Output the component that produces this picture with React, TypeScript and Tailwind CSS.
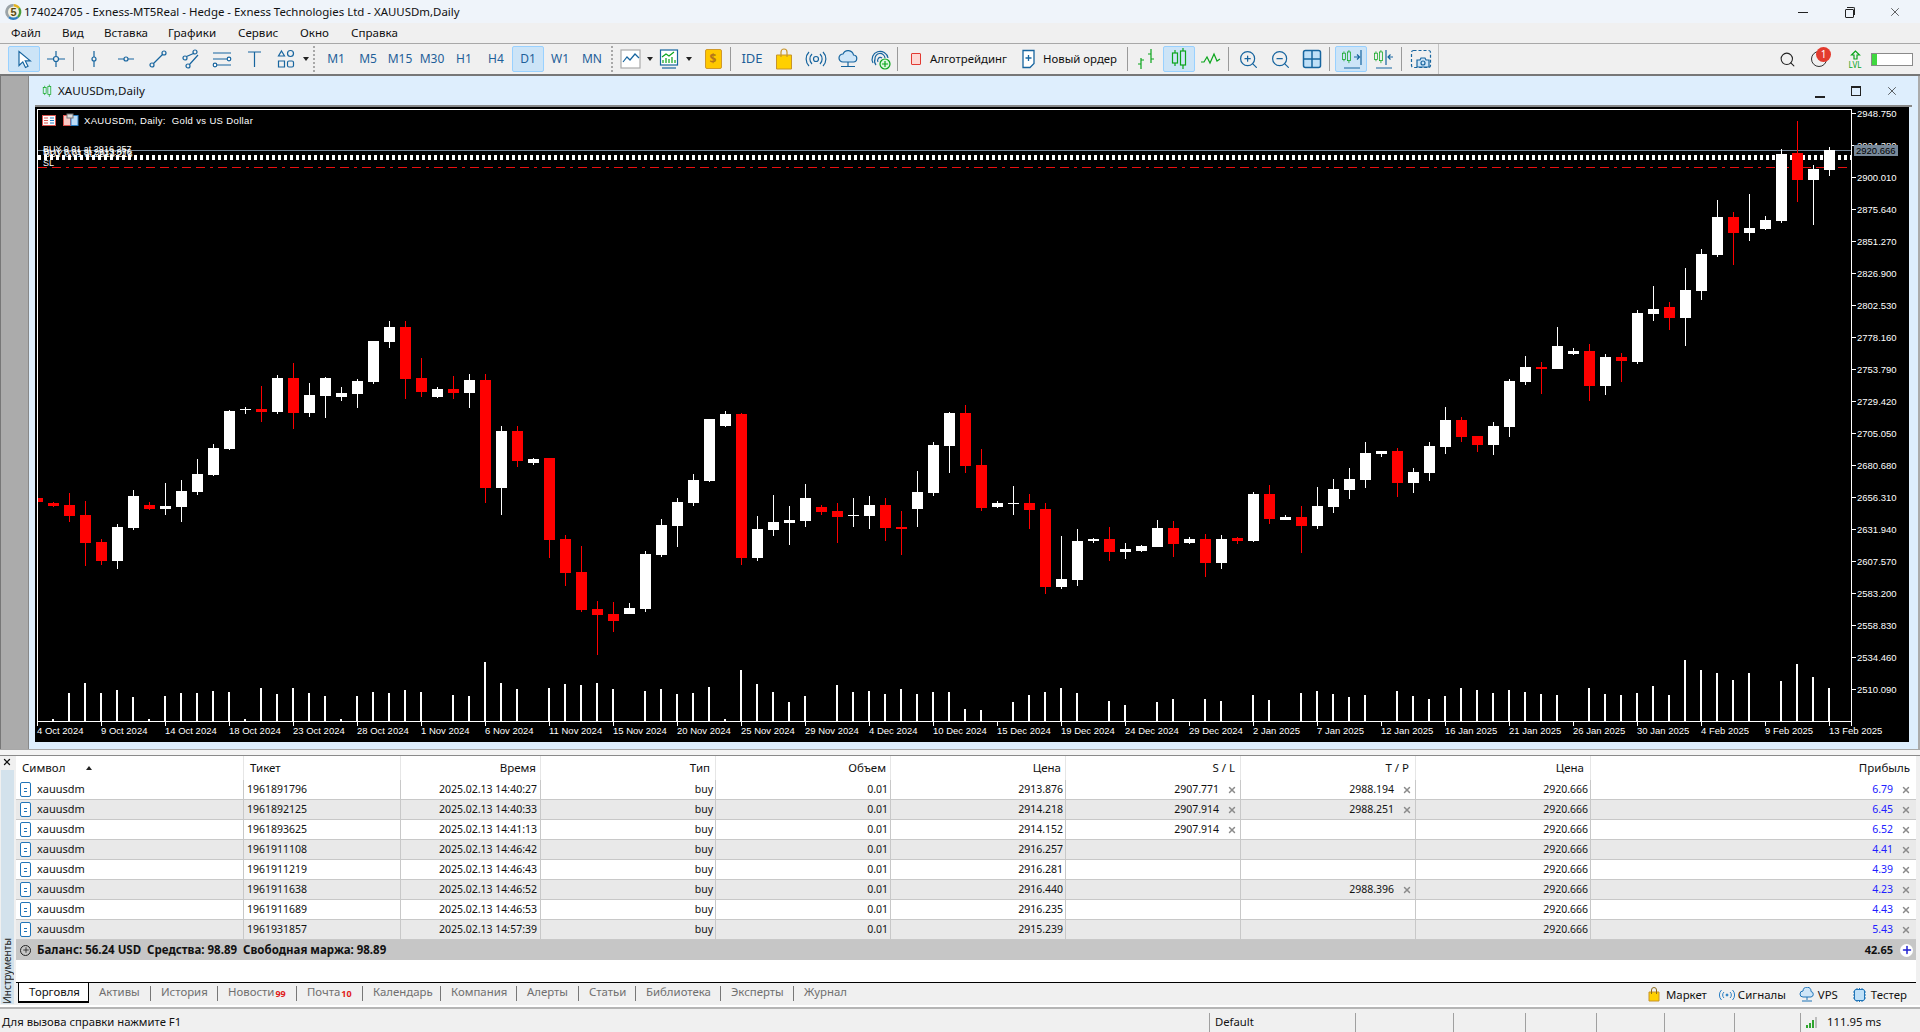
import { Plus, X, ZoomIn, ZoomOut, Search } from "lucide-react"
import type { ReactNode } from "react"

// high, body top, body bottom, low (page px), r = bearish
type Candle = [number, number, number, number, "r" | "w"]

const candles: Candle[] = [
  [498, 498, 502, 502, "r"], [502, 503, 506, 507, "r"], [493, 505, 516, 522, "r"], [501, 515, 543, 566, "r"],
  [539, 542, 561, 565, "r"], [524, 527, 561, 569, "w"], [490, 496, 528, 530, "w"], [502, 505, 509, 510, "r"],
  [483, 506, 509, 515, "w"], [480, 491, 507, 522, "w"], [459, 474, 492, 495, "w"], [444, 448, 475, 476, "w"],
  [410, 411, 449, 450, "w"], [407, 409, 410, 414, "w"], [386, 409, 412, 422, "r"], [375, 378, 412, 414, "w"],
  [363, 378, 413, 429, "r"], [383, 395, 413, 417, "w"], [377, 378, 396, 418, "w"], [387, 393, 397, 401, "w"],
  [379, 381, 394, 408, "w"], [341, 341, 382, 384, "w"], [321, 327, 342, 348, "w"], [321, 327, 379, 399, "r"],
  [358, 378, 392, 397, "r"], [387, 389, 397, 398, "w"], [376, 389, 393, 399, "r"], [374, 380, 393, 408, "w"],
  [374, 380, 488, 503, "r"], [426, 431, 488, 515, "w"], [426, 431, 461, 467, "r"], [458, 459, 463, 465, "w"],
  [458, 458, 540, 558, "r"], [535, 539, 573, 586, "r"], [546, 572, 610, 612, "r"], [601, 609, 615, 655, "r"],
  [602, 614, 621, 632, "r"], [603, 608, 614, 614, "w"], [551, 554, 609, 612, "w"], [519, 525, 555, 557, "w"],
  [498, 502, 526, 547, "w"], [474, 480, 503, 506, "w"], [419, 419, 481, 482, "w"], [411, 414, 426, 427, "w"],
  [413, 414, 558, 565, "r"], [516, 529, 558, 561, "w"], [495, 522, 530, 536, "w"], [506, 520, 523, 545, "w"],
  [484, 498, 521, 527, "w"], [505, 507, 512, 515, "r"], [503, 511, 517, 543, "r"], [498, 515, 516, 527, "w"],
  [496, 505, 516, 529, "w"], [498, 505, 528, 541, "r"], [511, 527, 529, 555, "r"], [471, 492, 509, 527, "w"],
  [442, 445, 493, 496, "w"], [412, 413, 446, 473, "w"], [405, 413, 466, 473, "r"], [449, 465, 508, 511, "r"],
  [501, 503, 507, 508, "w"], [486, 503, 504, 515, "w"], [494, 503, 510, 529, "r"], [503, 509, 587, 594, "r"],
  [536, 579, 587, 589, "w"], [529, 541, 580, 586, "w"], [538, 539, 541, 543, "w"], [527, 539, 552, 561, "r"],
  [543, 549, 552, 559, "w"], [545, 546, 551, 552, "w"], [520, 528, 547, 547, "w"], [521, 528, 544, 557, "r"],
  [537, 539, 543, 544, "w"], [534, 539, 563, 577, "r"], [535, 539, 563, 569, "w"], [537, 538, 541, 544, "r"],
  [492, 494, 541, 542, "w"], [485, 494, 519, 524, "r"], [515, 517, 520, 520, "w"], [506, 517, 526, 553, "r"],
  [487, 506, 526, 529, "w"], [479, 489, 507, 513, "w"], [468, 479, 490, 499, "w"], [442, 453, 480, 488, "w"],
  [451, 451, 454, 457, "w"], [448, 451, 483, 497, "r"], [468, 472, 483, 493, "w"], [442, 446, 473, 481, "w"],
  [407, 420, 447, 454, "w"], [417, 420, 437, 442, "r"], [436, 436, 445, 452, "r"], [422, 426, 445, 455, "w"],
  [379, 381, 427, 437, "w"], [356, 367, 382, 385, "w"], [362, 367, 369, 394, "r"], [327, 346, 369, 369, "w"],
  [348, 351, 354, 355, "w"], [344, 351, 386, 401, "r"], [354, 357, 386, 395, "w"], [353, 357, 361, 382, "r"],
  [310, 313, 362, 364, "w"], [286, 309, 314, 321, "w"], [302, 307, 318, 330, "r"], [268, 290, 318, 346, "w"],
  [249, 254, 291, 300, "w"], [200, 217, 255, 257, "w"], [212, 217, 233, 265, "r"], [194, 228, 233, 241, "w"],
  [216, 220, 229, 230, "w"], [149, 154, 221, 223, "w"], [121, 153, 180, 202, "r"], [165, 169, 180, 225, "w"],
  [147, 150, 170, 176, "w"],
]

const volumes = [
  0, 2, 28, 38, 28, 31, 24, 2, 25, 28, 28, 30, 29, 2, 33, 27, 33, 28, 25, 2, 25, 29, 28, 31, 29, 0, 26, 25,
  59, 38, 32, 0, 33, 37, 36, 38, 32, 0, 30, 32, 27, 28, 34, 2, 51, 37, 29, 19, 25, 0, 36, 29, 30, 27, 32, 27,
  29, 29, 12, 11, 0, 19, 26, 29, 33, 28, 0, 20, 16, 0, 19, 22, 0, 22, 20, 0, 26, 21, 0, 28, 30, 27, 24, 26,
  0, 30, 25, 22, 25, 33, 31, 28, 31, 29, 27, 26, 0, 33, 27, 26, 28, 35, 26, 61, 51, 48, 41, 48, 0, 40, 57, 44, 33,
]

const prices = [
  "2948.750", "2924.380", "2900.010", "2875.640", "2851.270", "2826.900", "2802.530", "2778.160", "2753.790",
  "2729.420", "2705.050", "2680.680", "2656.310", "2631.940", "2607.570", "2583.200", "2558.830", "2534.460", "2510.090",
]

const dates = [
  "4 Oct 2024", "9 Oct 2024", "14 Oct 2024", "18 Oct 2024", "23 Oct 2024", "28 Oct 2024", "1 Nov 2024", "6 Nov 2024",
  "11 Nov 2024", "15 Nov 2024", "20 Nov 2024", "25 Nov 2024", "29 Nov 2024", "4 Dec 2024", "10 Dec 2024", "15 Dec 2024",
  "19 Dec 2024", "24 Dec 2024", "29 Dec 2024", "2 Jan 2025", "7 Jan 2025", "12 Jan 2025", "16 Jan 2025", "21 Jan 2025",
  "26 Jan 2025", "30 Jan 2025", "4 Feb 2025", "9 Feb 2025", "13 Feb 2025",
]

const trades = [
  { ticket: "1961891796", time: "2025.02.13 14:40:27", price: "2913.876", sl: "2907.771", tp: "2988.194", profit: "6.79" },
  { ticket: "1961892125", time: "2025.02.13 14:40:33", price: "2914.218", sl: "2907.914", tp: "2988.251", profit: "6.45" },
  { ticket: "1961893625", time: "2025.02.13 14:41:13", price: "2914.152", sl: "2907.914", tp: "", profit: "6.52" },
  { ticket: "1961911108", time: "2025.02.13 14:46:42", price: "2916.257", sl: "", tp: "", profit: "4.41" },
  { ticket: "1961911219", time: "2025.02.13 14:46:43", price: "2916.281", sl: "", tp: "", profit: "4.39" },
  { ticket: "1961911638", time: "2025.02.13 14:46:52", price: "2916.440", sl: "", tp: "2988.396", profit: "4.23" },
  { ticket: "1961911689", time: "2025.02.13 14:46:53", price: "2916.235", sl: "", tp: "", profit: "4.43" },
  { ticket: "1961931857", time: "2025.02.13 14:57:39", price: "2915.239", sl: "", tp: "", profit: "5.43" },
]

const menu = [
  { label: "Файл", w: "w-[51px]" },
  { label: "Вид", w: "w-[42px]" },
  { label: "Вставка", w: "w-[64px]" },
  { label: "Графики", w: "w-[70px]" },
  { label: "Сервис", w: "w-[62px]" },
  { label: "Окно", w: "w-[51px]" },
  { label: "Справка", w: "w-[70px]" },
]

const tabs = [
  { label: "Активы", w: "w-[62px]" },
  { label: "История", w: "w-[67px]" },
  { label: "Новости", w: "w-[79px]", sup: "99" },
  { label: "Почта", w: "w-[66px]", sup: "10" },
  { label: "Календарь", w: "w-[78px]" },
  { label: "Компания", w: "w-[76px]" },
  { label: "Алерты", w: "w-[62px]" },
  { label: "Статьи", w: "w-[57px]" },
  { label: "Библиотека", w: "w-[85px]" },
  { label: "Эксперты", w: "w-[73px]" },
]

const timeframes = ["M1", "M5", "M15", "M30", "H1", "H4", "D1", "W1", "MN"]
const BLUE = "#17659f"
const GREEN = "#0aa51b"
const COLS = "grid grid-cols-[228px_157px_140px_175px_175px_175px_175px_175px_175px_325px]"

function Ico({ children }: { children: ReactNode }) {
  return (
    <svg width="24" height="24" viewBox="0 0 24 24" fill="none" stroke={BLUE} strokeWidth="1.2">
      {children}
    </svg>
  )
}

function Btn({ children, active }: { children: ReactNode; active?: boolean }) {
  return (
    <div
      className={`w-[32px] h-[26px] shrink-0 flex items-center justify-center rounded-[2px] border ${
        active ? "bg-[#cce4f7] border-[#99d1ff]" : "border-transparent"
      }`}
    >
      {children}
    </div>
  )
}

function Sep({ ml, mr }: { ml: string; mr: string }) {
  return <div className={`w-px h-[24px] bg-[#9a9a9a] shrink-0 ${ml} ${mr}`} />
}

function Grip({ ml, mr }: { ml: string; mr: string }) {
  return <div className={`w-[2px] h-[26px] shrink-0 border-l-2 border-dotted border-[#a8a8a8] ${ml} ${mr}`} />
}

function Caret({ w }: { w: string }) {
  return (
    <div className={`shrink-0 flex justify-center ${w}`}>
      <div className="w-0 h-0 border-x-[3.5px] border-x-transparent border-t-[4px] border-t-[#222]" />
    </div>
  )
}

function Logo() {
  return (
    <svg width="17" height="18" viewBox="0 0 16 18" className="shrink-0">
      <path d="M8 1a8 8 0 0 1 6.5 3.5L8 9z" fill="#e2b21f" />
      <path d="M14.5 4.500A8 8 0 0 1 13 15L8 9z" fill="#4a9d3c" />
      <path d="M13 15A8 8 0 0 1 2.500 15L8 9z" fill="#2f7fc1" />
      <path d="M2.500 15A8 8 0 0 1 8 1v8z" fill="#9aa3a8" />
      <circle cx="8" cy="9" r="5.500" fill="#f4f1e0" />
      <text x="8" y="13" textAnchor="middle" fontSize="11" fill="#5a4a10" fontWeight="700" fontFamily="Liberation Sans">5</text>
    </svg>
  )
}

function MiniCandles({ stroke = GREEN }: { stroke?: string }) {
  return (
    <g stroke={stroke} strokeWidth="1.2" fill="none">
      <path d="M8 3v3M8 16v3M16 1v3M16 18v4" />
      <rect x="5.500" y="6" width="5" height="10" />
      <rect x="13.500" y="4" width="5" height="14" />
    </g>
  )
}

function Chart() {
  return (
    <svg width="1874" height="635" viewBox="36 107 1874 635" className="block font-['Liberation_Sans',sans-serif]" shapeRendering="crispEdges">
      <defs>
        <clipPath id="plot">
          <rect x="39" y="110" width="1813" height="611" />
        </clipPath>
      </defs>
      <path d="M38.500 721V109.500H1852.500V726" fill="none" stroke="#fff" />
      <path d="M38 721.500H1853" stroke="#fff" />

      <rect x="39" y="150" width="1813" height="1" fill="#778899" />
      <line x1="39" x2="1852" y1="157.500" y2="157.500" stroke="#fff" strokeWidth="5" strokeDasharray="3 3" />
      <line x1="39" x2="1848" y1="167.500" y2="167.500" stroke="#e81010" strokeWidth="1" strokeDasharray="9 5 9 5 3 5" />

      <g clipPath="url(#plot)">
        {candles.map(([hi, top, bot, lo, c], i) => {
          const cx = 38 + 16 * i
          const fill = c === "r" ? "#ff0000" : "#ffffff"
          return (
            <g key={i} fill={fill}>
              <rect x={cx} y={hi} width="1" height={lo - hi} />
              <rect x={cx - 5} y={top} width="11" height={Math.max(bot - top, 1)} />
            </g>
          )
        })}
        {volumes.map((v, i) =>
          v > 0 ? <rect key={i} x={37 + 16 * i} y={721 - v} width="2" height={v} fill="#fff" /> : null
        )}
      </g>

      {/* trade labels piled on top of each other */}
      <g fill="#fff" fontSize="9" shapeRendering="auto">
        <text x="44" y="152">BUY 0.01 at 2916.257</text>
        <text x="44" y="155">BUY 0.01 at 2913.876</text>
        <text x="45" y="157">BUY 0.01 at 2914.218</text>
        <text x="44" y="166">SL</text>
      </g>

      {/* legend */}
      <g shapeRendering="auto">
        <rect x="43.500" y="115.500" width="13" height="10" fill="#fff" stroke="#d9534f" />
        <path d="M45 118h4M45 120.500h4M45 123h4" stroke="#d9534f" />
        <path d="M51 118h4M51 120.500h4M51 123h4" stroke="#2a7fc4" />
        <rect x="64.500" y="115.500" width="7" height="10" fill="#f9c9c4" stroke="#d9534f" />
        <rect x="72" y="115.500" width="7" height="10" fill="#bcdcf7" stroke="#2a7fc4" />
        <rect x="68" y="114" width="6" height="4" fill="#ddd" stroke="#777" />
        <text x="85" y="124" fill="#fff" fontSize="9.500" letterSpacing=".35" xmlSpace="preserve">XAUUSDm, Daily:  Gold vs US Dollar</text>
      </g>

      {/* price axis */}
      {prices.map((p, i) => (
        <g key={p}>
          <rect x="1853" y={113 + i * 32} width="4" height="1" fill="#fff" />
          <text x="1858" y={117 + i * 32} fill="#fff" fontSize="9.500" shapeRendering="auto">{p}</text>
        </g>
      ))}
      <rect x="1855" y="145" width="44" height="11" fill="#778899" />
      <text x="1857" y="154" fill="#000" fontSize="9.500" shapeRendering="auto">2920.666</text>

      {/* time axis */}
      {dates.map((d, i) => (
        <g key={d}>
          <rect x={38 + i * 64} y="722" width="1" height="4" fill="#fff" />
          <text x={38 + i * 64} y="734" fill="#fff" fontSize="9.500" shapeRendering="auto">{d}</text>
        </g>
      ))}
    </svg>
  )
}

function Toolbar() {
  return (
    <div className="h-[30px] flex items-center pl-[8px] bg-[#f0f0f0] text-[#111]">
      <Btn active>
        <Ico><path d="M7 4.500v14l3.800-3.600 2.700 5.600 2.500-1.200-2.700-5.400h5z" fill="#fff" /></Ico>
      </Btn>
      <Btn><Ico><path d="M3 12h6M15 12h6M12 4v5M12 15v5" /><circle cx="12" cy="12" r="2.500" /></Ico></Btn>
      <Sep ml="ml-[1px]" mr="mr-[4px]" />
      <Btn><Ico><path d="M12 4v6M12 14v6" /><circle cx="12" cy="12" r="2" /></Ico></Btn>
      <Btn><Ico><path d="M4 12h6M14 12h6" /><circle cx="12" cy="12" r="2" /></Ico></Btn>
      <Btn><Ico><circle cx="6" cy="18" r="2" /><circle cx="18" cy="6" r="2" /><path d="M7.500 16.500l9-9" /></Ico></Btn>
      <Btn><Ico><circle cx="7" cy="11" r="2" /><circle cx="17" cy="5" r="2" /><circle cx="10" cy="19" r="2" /><path d="M8.500 9.500L15.500 6.500M11.500 17.500L20 8" /></Ico></Btn>
      <Btn><Ico><path d="M3 6h18M3 12h15M3 18h18" /><circle cx="19" cy="12" r="1.800" fill="#fff" /><circle cx="5" cy="18" r="1.800" fill="#fff" /></Ico></Btn>
      <Btn><Ico><path d="M6 5h13M12.500 5v15" /></Ico></Btn>
      <Btn><Ico><path d="M7.500 4l3 5h-6zM4.500 14h6v6h-6z" /><circle cx="16.500" cy="6.500" r="3" /><rect x="13.500" y="14" width="6" height="6" rx="1.500" /></Ico></Btn>
      <Caret w="w-[8px]" />
      <Grip ml="ml-[3px]" mr="mr-[5px]" />
      {timeframes.map((t) => (
        <Btn key={t} active={t === "D1"}>
          <span className="text-[12px] text-[#1f5f99]">{t}</span>
        </Btn>
      ))}
      <Grip ml="ml-[3px]" mr="mr-[1px]" />
      <Btn><Ico><rect x="3" y="3" width="19" height="18" stroke="#aaa" fill="#fff" /><path d="M5 15l4-5 3 3 5-6 4 4" /></Ico></Btn>
      <Caret w="w-[7px]" />
      <Btn>
        <Ico>
          <rect x="3.500" y="3" width="17" height="15" fill="#fff" />
          <path d="M5 10l4-3 3 2 5-4" stroke={GREEN} />
          <path d="M6 16v-3M9 16v-5M12 16v-4M15 16v-6M18 16v-3" stroke={GREEN} />
          <path d="M5 21h14" />
        </Ico>
      </Btn>
      <Caret w="w-[7px]" />
      <div className="w-[5px] shrink-0" />
      <Btn>
        <div className="w-[17px] h-[20px] rounded-[2px] bg-[#ffc800] border border-[#d19a2a] flex items-center justify-center text-[12px] font-bold text-[#b5761a]">$</div>
      </Btn>
      <Sep ml="ml-[1px]" mr="mr-[5px]" />
      <Btn><span className="text-[13px] text-[#1f5f99]">IDE</span></Btn>
      <Btn>
        <svg width="24" height="24" viewBox="0 0 24 24" fill="none">
          <path d="M4.500 8h15v14h-15z" fill="#ffd000" stroke="#c8952a" />
          <path d="M9 10V5a3 3 0 0 1 6 0v5" stroke="#c8952a" strokeWidth="1.200" />
        </svg>
      </Btn>
      <Btn><Ico><circle cx="12" cy="12" r="2.500" /><path d="M8 7a7 7 0 0 0 0 10M16 7a7 7 0 0 1 0 10M5 5a10 10 0 0 0 0 14M19 5a10 10 0 0 1 0 14" /></Ico></Btn>
      <Btn><Ico><path d="M7 15a4 4 0 0 1 0-8 5.500 5.500 0 0 1 10.500 1A3.500 3.500 0 0 1 17 15z" fill="#cfe6f8" /><path d="M12 15v4M5 19.500h14" /></Ico></Btn>
      <Btn>
        <Ico>
          <path d="M5 16a8 8 0 1 1 15-5M8 18a6 6 0 0 1-1-6 5 5 0 0 1 10-1M10 15a3 3 0 0 1 0-3 2.500 2.500 0 0 1 4-1" />
          <circle cx="17" cy="17" r="5" fill="#d9f7dc" stroke={GREEN} />
          <path d="M17 14v6M14 17h6" stroke={GREEN} />
        </Ico>
      </Btn>
      <Sep ml="ml-[1px]" mr="mr-[13px]" />
      <div className="w-[10px] h-[12px] rounded-[1px] bg-[#fdd9d5] border border-[#e23a32] shrink-0" />
      <span className="ml-[9px] w-[77px] shrink-0 text-[11.4px] whitespace-nowrap">Алготрейдинг</span>
      <svg width="16" height="20" viewBox="0 0 16 20" fill="none" stroke={BLUE} strokeWidth="1.3" className="ml-[14px] shrink-0">
        <path d="M2 1.500h11v13l-4 4H2z" fill="#fff" />
        <path d="M7.500 6v6M4.500 9h6" />
      </svg>
      <span className="ml-[6px] w-[74px] shrink-0 text-[11.4px] whitespace-nowrap">Новый ордер</span>
      <Sep ml="ml-[10px]" mr="mr-[3px]" />
      <Btn><Ico><path d="M6 22v-11M6 17H3M6 13h3M16 2v14M16 7h-3M16 12h3" stroke={GREEN} /></Ico></Btn>
      <Btn active><Ico><MiniCandles /></Ico></Btn>
      <Btn><Ico><path d="M2 15h3l3-5 3 6 4-9 3 7 3-2" stroke={GREEN} /></Ico></Btn>
      <Sep ml="ml-[1px]" mr="mr-[3px]" />
      <Btn><ZoomIn size={21} color={BLUE} strokeWidth={1.4} /></Btn>
      <Btn><ZoomOut size={21} color={BLUE} strokeWidth={1.4} /></Btn>
      <Btn><Ico><rect x="3.500" y="3.500" width="17" height="17" rx="2" fill="#bfe0f8" strokeWidth="1.500" /><path d="M12 3.500v17M3.500 12h17" strokeWidth="1.500" /></Ico></Btn>
      <Sep ml="ml-[1px]" mr="mr-[5px]" />
      <Btn active>
        <Ico>
          <g transform="scale(.62) translate(0 4)"><MiniCandles /></g>
          <path d="M15 10h5M18 7.500l2.500 2.500L18 12.500M22 3v15M5 21h16" stroke={BLUE} />
        </Ico>
      </Btn>
      <Btn>
        <Ico>
          <g transform="scale(.62) translate(0 4)"><MiniCandles /></g>
          <path d="M15 3v15M22 10h-5M19.500 7.500L17 10l2.500 2.500M5 21h16" stroke={BLUE} />
        </Ico>
      </Btn>
      <Sep ml="ml-[2px]" mr="mr-[3px]" />
      <Btn>
        <Ico>
          <rect x="2.500" y="3.500" width="19" height="17" rx="2" strokeDasharray="3 2" />
          <path d="M8 20v-7h3l1-2h4l1 2h3v7z" fill="#cfe6f8" />
          <circle cx="14" cy="16" r="2" />
        </Ico>
      </Btn>
      <div className="w-px h-[30px] bg-[#c4c4c4] ml-[1px]" />

      <div className="ml-auto flex items-center pr-[7px]">
        <Search size={17} color="#222" strokeWidth={1.5} />
        <div className="relative ml-[15px] w-[16px] h-[16px] rounded-full border border-[#333] mr-[21px]">
          <div className="absolute left-[4px] -top-[5px] w-[15px] h-[15px] rounded-full bg-[#e33b2e] text-white text-[10px] leading-[15px] text-center">1</div>
        </div>
        <div className="flex flex-col items-center w-[14px] mr-[9px]">
          <svg width="11" height="10" viewBox="0 0 11 10" fill="none" stroke={GREEN} strokeWidth="1.200">
            <path d="M5.500 1L1.500 5h2.500v4h3V5h2.500z" />
          </svg>
          <span className="text-[8px] leading-[9px] text-[#0aa51b]">LVL</span>
        </div>
        <div className="w-[42px] h-[13px] border border-[#8a8a8a] bg-white flex">
          <div className="w-[5px] bg-[#3fd83f]" />
        </div>
      </div>
    </div>
  )
}

function CloseX() {
  return <X size={10} strokeWidth={3.5} color="#8b8b8b" className="shrink-0" />
}

function Positions() {
  const head = "h-full flex items-center border-r border-[#e6e6e6]"
  const cell = "h-full flex items-center justify-end border-r border-[#c8c8c8] text-[10.5px]"
  return (
    <div className="flex flex-col w-[1900px]">
      <div className={`${COLS} h-[24px] bg-white text-[11.5px]`}>
        <div className={`${head} pl-[6px]`}>
          Символ
          <div className="ml-[21px] w-0 h-0 border-x-[3.5px] border-x-transparent border-b-[4px] border-b-[#222]" />
        </div>
        <div className={`${head} pl-[6px]`}>Тикет</div>
        <div className={`${head} justify-end pr-[4px]`}>Время</div>
        <div className={`${head} justify-end pr-[5px]`}>Тип</div>
        <div className={`${head} justify-end pr-[4px]`}>Объем</div>
        <div className={`${head} justify-end pr-[4px]`}>Цена</div>
        <div className={`${head} justify-end pr-[5px]`}>S / L</div>
        <div className={`${head} justify-end pr-[6px]`}>T / P</div>
        <div className={`${head} justify-end pr-[6px]`}>Цена</div>
        <div className="h-full flex items-center justify-end pr-[6px]">Прибыль</div>
      </div>
      {trades.map((t, i) => (
        <div key={t.ticket} className={`${COLS} h-[20px] border-b border-[#c8c8c8] ${i % 2 ? "bg-[#e9e9e9]" : "bg-white"}`}>
          <div className="h-full flex items-center border-r border-[#c8c8c8] pl-[4px]">
            <div className="w-[11px] h-[15px] rounded-[2px] border border-[#1f74b8] bg-white flex flex-col items-center justify-center gap-[2px] mr-[6px]">
              <div className="w-[3px] h-px bg-[#1f74b8]" />
              <div className="w-[3px] h-px bg-[#1f74b8]" />
            </div>
            xauusdm
          </div>
          <div className="h-full flex items-center border-r border-[#c8c8c8] pl-[3px] text-[10.5px]">{t.ticket}</div>
          <div className={`${cell} pr-[3px]`}>{t.time}</div>
          <div className={`${cell} pr-[2px]`}>buy</div>
          <div className={`${cell} pr-[2px]`}>0.01</div>
          <div className={`${cell} pr-[2px]`}>{t.price}</div>
          <div className={`${cell} pr-[3px] gap-[8px]`}>
            {t.sl && <>{t.sl}<CloseX /></>}
          </div>
          <div className={`${cell} pr-[3px] gap-[8px]`}>
            {t.tp && <>{t.tp}<CloseX /></>}
          </div>
          <div className={`${cell} pr-[2px]`}>2920.666</div>
          <div className="h-full flex items-center justify-end pr-[5px] gap-[8px] text-[#2020ff] text-[10.5px]">
            {t.profit}
            <CloseX />
          </div>
        </div>
      ))}
      <div className="h-[20px] bg-[#c6c6c6] flex items-center font-bold pl-[4px] text-[11.5px]">
        <div className="w-[11px] h-[11px] rounded-full border border-[#222] flex items-center justify-center mr-[6px]">
          <Plus size={8} strokeWidth={2.5} color="#222" />
        </div>
        <span className="whitespace-nowrap">Баланс: 56.24 USD</span>
        <span className="ml-[6px] whitespace-nowrap">Средства: 98.89</span>
        <span className="ml-[6px] whitespace-nowrap">Свободная маржа: 98.89</span>
        <span className="ml-auto text-[11px]">42.65</span>
        <div className="w-[13px] h-[13px] rounded-full bg-white ml-[7px] mr-[3px] flex items-center justify-center">
          <Plus size={12} strokeWidth={3} color="#2020d0" />
        </div>
      </div>
    </div>
  )
}

function BottomTabs() {
  return (
    <div className="h-[23px] w-[1900px] flex items-start bg-[#f0f0f0] border-t border-black text-[#6f6f6f] text-[11.4px]">
      <div className="ml-[2px] w-[71px] h-[20px] bg-white border-x border-b-2 border-black text-[#111] pl-[10px] flex items-center">Торговля</div>
      {tabs.map((t) => (
        <div key={t.label} className={`${t.w} h-[15px] mt-[3px] pl-[10px] pb-[4px] border-r border-[#777] flex items-center whitespace-nowrap`}>
          {t.label}
          {t.sup && <span className="ml-[1px] mt-[5px] text-[9px] font-bold text-[#e02020]">{t.sup}</span>}
        </div>
      ))}
      <div className="h-[15px] mt-[3px] pl-[10px] pb-[4px] flex items-center">Журнал</div>
      <div className="ml-auto mt-[3px] pr-[9px] flex items-center text-[#111]">
        <svg width="12" height="15" viewBox="0 0 12 15" fill="none">
          <path d="M1 5h10v9H1z" fill="#ffd000" stroke="#c8952a" />
          <path d="M3.500 7V3a2.500 2.500 0 0 1 5 0v4" stroke="#8a6a1a" />
        </svg>
        <span className="ml-[6px]">Маркет</span>
        <svg width="16" height="12" viewBox="0 0 16 12" fill="none" stroke="#2a7fc4" className="ml-[12px]">
          <circle cx="8" cy="6" r="1" fill="#2a7fc4" />
          <path d="M5 3a4 4 0 0 0 0 6M11 3a4 4 0 0 1 0 6M2.500 1a7 7 0 0 0 0 10M13.500 1a7 7 0 0 1 0 10" />
        </svg>
        <span className="ml-[3px]">Сигналы</span>
        <svg width="16" height="16" viewBox="0 0 16 16" fill="none" stroke="#1f74b8" className="ml-[13px]">
          <path d="M4 10a3 3 0 0 1 0-6 4 4 0 0 1 8 .500A2.800 2.800 0 0 1 12 10z" fill="#cfe6f8" />
          <path d="M8 10v3M3 14h10" />
        </svg>
        <span className="ml-[3px]">VPS</span>
        <svg width="15" height="16" viewBox="0 0 15 16" fill="#bfe0f8" stroke="#1f74b8" className="ml-[14px]">
          <rect x="2.500" y="2.500" width="10" height="11" rx="1.500" />
          <path d="M1 5h1.500M1 8h1.500M1 11h1.500M12.500 5H14M12.500 8H14M12.500 11H14M5 1v1.500M7.500 1v1.500M10 1v1.500M5 13.500V15M7.500 13.500V15M10 13.500V15" fill="none" />
        </svg>
        <span className="ml-[4px]">Тестер</span>
      </div>
    </div>
  )
}

function StatusBar() {
  const cell = "h-[19px] border-l border-[#a0a0a0] shrink-0"
  return (
    <div className="h-[23px] bg-[#f0f0f0] flex items-end text-[#111] text-[11.3px]">
      <div className="w-[1209px] h-[19px] pl-[2px] shrink-0 flex items-center">Для вызова справки нажмите F1</div>
      <div className={`${cell} w-[146px] pl-[5px] flex items-center`}>Default</div>
      <div className={`${cell} w-[98px]`} />
      <div className={`${cell} w-[72px]`} />
      <div className={`${cell} w-[71px]`} />
      <div className={`${cell} w-[68px]`} />
      <div className={`${cell} w-[70px]`} />
      <div className={`${cell} w-[66px]`} />
      <div className={`${cell} flex-1 flex items-center pl-[5px]`}>
        <svg width="11" height="11" viewBox="0 0 11 11" className="shrink-0">
          <path d="M0 8h2v3H0zM3 6h2v5H3zM6 3h2v8H6z" fill="#2fa52f" />
          <path d="M9 0h2v11H9z" fill="#bdbdbd" />
        </svg>
        <span className="ml-[10px] whitespace-nowrap">111.95 ms</span>
      </div>
    </div>
  )
}

export default function App() {
  return (
    <div className="w-[1920px] h-[1032px] overflow-hidden flex flex-col bg-[#f0f0f0] font-['Noto_Sans',sans-serif] text-[11px] text-[#111]">
      {/* title bar */}
      <div className="h-[23px] flex items-center bg-[#eff4fa] pl-[5px] text-[11.45px] pt-px">
        <Logo />
        <span className="ml-[2px] whitespace-nowrap">174024705 - Exness-MT5Real - Hedge - Exness Technologies Ltd - XAUUSDm,Daily</span>
        <div className="ml-auto flex items-center text-[#222] pr-[2px]">
          <div className="w-[46px] flex justify-center"><div className="w-[10px] h-px bg-[#222]" /></div>
          <div className="w-[46px] flex justify-center">
            <div className="relative w-[9px] h-[9px] border border-[#222] rounded-[1px] mt-[2px]">
              <div className="absolute -top-[3px] left-[1px] w-[8px] h-[8px] border-t border-r border-[#222] rounded-tr-[2px]" />
            </div>
          </div>
          <div className="w-[46px] flex justify-center"><X size={14} strokeWidth={1.2} color="#222" /></div>
        </div>
      </div>

      {/* menu */}
      <div className="h-[21px] flex items-center pl-[11px] bg-[#f0f0f0] text-[11.6px] border-b border-[#a8a8a8]">
        {menu.map((m) => (
          <div key={m.label} className={m.w}>{m.label}</div>
        ))}
      </div>

      <Toolbar />
      <div className="h-[2px] bg-[#777]" />

      {/* chart area */}
      <div className="h-[673px] flex bg-[#ababab] border-l border-[#777] pl-[27px]">
        <div className="flex-1 flex flex-col bg-[#deeefd] border-l border-[#888] mr-[2px]">
          <div className="h-[29px] flex items-center pl-[11px] text-[11.6px]">
            <svg width="14" height="18" viewBox="0 0 24 24" className="shrink-0"><MiniCandles /></svg>
            <span className="ml-[4px]">XAUUSDm,Daily</span>
            <div className="ml-auto flex items-center pr-[8px]">
              <div className="w-[36px] flex justify-center"><div className="w-[10px] h-[10px] mt-[4px] border-b-2 border-[#222]" /></div>
              <div className="w-[36px] flex justify-center"><div className="w-[10px] h-[10px] border border-[#222] border-t-2" /></div>
              <div className="w-[36px] flex justify-center"><X size={14} strokeWidth={1.2} color="#222" /></div>
            </div>
          </div>
          <div className="h-[2px] bg-[#888] mx-[6px] mr-[6px]" />
          <div className="ml-[6px] bg-black w-[1874px]">
            <Chart />
          </div>
        </div>
      </div>

      {/* trade panel */}
      <div className="h-[6px] bg-[#f4f4f4] border-t border-[#a8a8a8]" />
      <div className="flex-1 flex border-t border-[#8a8a8a] min-h-0">
        <div className="w-[16px] shrink-0 flex flex-col">
          <X size={10} strokeWidth={3} color="#111" className="ml-[2px] mt-[1px]" />
          <div className="mt-[3px] ml-[1px] w-[13px] h-[234px] bg-[#d3e2ec] flex items-end">
            <span className="[writing-mode:vertical-rl] rotate-180 leading-[13px] whitespace-nowrap text-[#222] text-[10px]">Инструменты</span>
          </div>
        </div>
        <div className="flex-1 flex flex-col min-w-0">
          <Positions />
          <div className="h-[22px] w-[1900px] bg-white" />
          <BottomTabs />
        </div>
      </div>
      <div className="h-[4px] bg-white border-b-2 border-[#b5b5b5]" />
      <StatusBar />
    </div>
  )
}
